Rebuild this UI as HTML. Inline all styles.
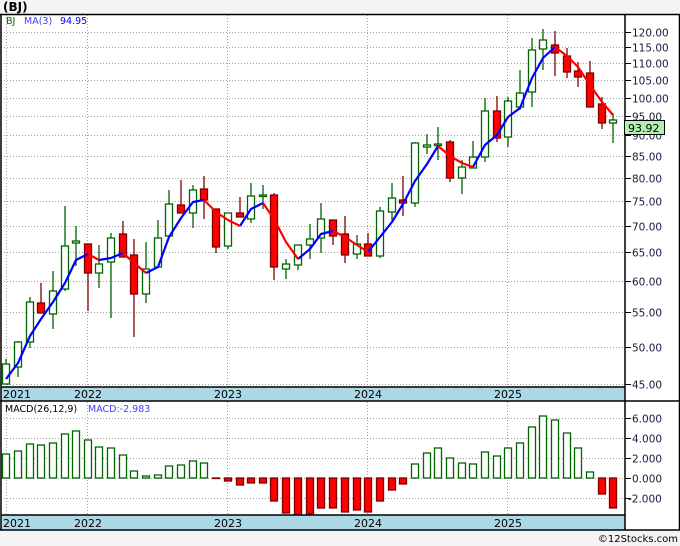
<!DOCTYPE html>
<html><head><meta charset="utf-8"><style>
html,body{margin:0;padding:0;background:#f4f4f4;}
svg{display:block;}
text{font-family:"DejaVu Sans","Liberation Sans",sans-serif;}
</style></head><body>
<svg width="680" height="546" viewBox="0 0 680 546" xmlns="http://www.w3.org/2000/svg">
<rect x="0" y="0" width="680" height="546" fill="#f4f4f4"/>
<text x="3" y="11" font-size="12" font-weight="bold" fill="#000">(BJ)</text>
<rect x="1" y="14" width="679" height="516" fill="#fff"/>
<!-- grids main -->
<g stroke="#a0a0a0" stroke-width="1" stroke-dasharray="1,2">
<line x1="1" x2="625" y1="32.5" y2="32.5"/><line x1="1" x2="625" y1="47.5" y2="47.5"/><line x1="1" x2="625" y1="63.5" y2="63.5"/><line x1="1" x2="625" y1="80.5" y2="80.5"/><line x1="1" x2="625" y1="98.5" y2="98.5"/><line x1="1" x2="625" y1="116.5" y2="116.5"/><line x1="1" x2="625" y1="135.5" y2="135.5"/><line x1="1" x2="625" y1="156.5" y2="156.5"/><line x1="1" x2="625" y1="178.5" y2="178.5"/><line x1="1" x2="625" y1="201.5" y2="201.5"/><line x1="1" x2="625" y1="226.5" y2="226.5"/><line x1="1" x2="625" y1="252.5" y2="252.5"/><line x1="1" x2="625" y1="281.5" y2="281.5"/><line x1="1" x2="625" y1="312.5" y2="312.5"/><line x1="1" x2="625" y1="347.5" y2="347.5"/><line x1="1" x2="625" y1="384.5" y2="384.5"/>
<line x1="6.5" x2="6.5" y1="15" y2="387"/><line x1="87.5" x2="87.5" y1="15" y2="387"/><line x1="227.5" x2="227.5" y1="15" y2="387"/><line x1="367.5" x2="367.5" y1="15" y2="387"/><line x1="507.5" x2="507.5" y1="15" y2="387"/>
<line x1="1" x2="625" y1="418.5" y2="418.5"/><line x1="1" x2="625" y1="438.5" y2="438.5"/><line x1="1" x2="625" y1="458.5" y2="458.5"/><line x1="1" x2="625" y1="478.5" y2="478.5"/><line x1="1" x2="625" y1="498.5" y2="498.5"/>
<line x1="6.5" x2="6.5" y1="402" y2="515"/><line x1="87.5" x2="87.5" y1="402" y2="515"/><line x1="227.5" x2="227.5" y1="402" y2="515"/><line x1="367.5" x2="367.5" y1="402" y2="515"/><line x1="507.5" x2="507.5" y1="402" y2="515"/>
</g>
<!-- candles -->
<g stroke-width="1.3">
<g stroke="#006400" fill="#fff">
<line x1="6" x2="6" y1="359" y2="384"/><rect x="2.5" y="364" width="7" height="20"/>
<line x1="18" x2="18" y1="341" y2="377"/><rect x="14.5" y="342" width="7" height="25"/>
<line x1="30" x2="30" y1="297" y2="348"/><rect x="26.5" y="302" width="7" height="40"/>
<line x1="53" x2="53" y1="271" y2="329"/><rect x="49.5" y="291" width="7" height="23"/>
<line x1="65" x2="65" y1="206" y2="291"/><rect x="61.5" y="246" width="7" height="43"/>
<line x1="76" x2="76" y1="226" y2="266"/><rect x="72.5" y="241" width="7" height="2"/>
<line x1="99" x2="99" y1="245" y2="288"/><rect x="95.5" y="264" width="7" height="9"/>
<line x1="111" x2="111" y1="233" y2="318"/><rect x="107.5" y="238" width="7" height="24"/>
<line x1="146" x2="146" y1="242" y2="303"/><rect x="142.5" y="269" width="7" height="25"/>
<line x1="158" x2="158" y1="220" y2="267"/><rect x="154.5" y="238" width="7" height="29"/>
<line x1="169" x2="169" y1="190" y2="236"/><rect x="165.5" y="204" width="7" height="32"/>
<line x1="193" x2="193" y1="185" y2="228"/><rect x="189.5" y="190" width="7" height="23"/>
<line x1="228" x2="228" y1="213" y2="249"/><rect x="224.5" y="213" width="7" height="33"/>
<line x1="251" x2="251" y1="183" y2="223"/><rect x="247.5" y="196" width="7" height="23"/>
<line x1="263" x2="263" y1="185" y2="209"/><rect x="259.5" y="195" width="7" height="1.5"/>
<line x1="286" x2="286" y1="259" y2="279"/><rect x="282.5" y="264" width="7" height="5"/>
<line x1="298" x2="298" y1="245" y2="270"/><rect x="294.5" y="245" width="7" height="20"/>
<line x1="310" x2="310" y1="224" y2="259"/><rect x="306.5" y="239" width="7" height="6"/>
<line x1="321" x2="321" y1="203" y2="253"/><rect x="317.5" y="219" width="7" height="19"/>
<line x1="357" x2="357" y1="235" y2="259"/><rect x="353.5" y="244" width="7" height="10"/>
<line x1="380" x2="380" y1="207" y2="258"/><rect x="376.5" y="211" width="7" height="45"/>
<line x1="392" x2="392" y1="183" y2="220"/><rect x="388.5" y="198" width="7" height="14"/>
<line x1="415" x2="415" y1="142" y2="207"/><rect x="411.5" y="143" width="7" height="60"/>
<line x1="427" x2="427" y1="134" y2="154"/><rect x="423.5" y="145" width="7" height="2"/>
<line x1="438" x2="438" y1="127" y2="160"/><rect x="434.5" y="144" width="7" height="1.5"/>
<line x1="462" x2="462" y1="160" y2="194"/><rect x="458.5" y="167" width="7" height="11"/>
<line x1="473" x2="473" y1="141" y2="168"/><rect x="469.5" y="157" width="7" height="11"/>
<line x1="485" x2="485" y1="98" y2="162"/><rect x="481.5" y="111" width="7" height="46"/>
<line x1="508" x2="508" y1="97" y2="147"/><rect x="504.5" y="101" width="7" height="36"/>
<line x1="520" x2="520" y1="70" y2="110"/><rect x="516.5" y="93" width="7" height="14"/>
<line x1="532" x2="532" y1="38" y2="107"/><rect x="528.5" y="50" width="7" height="42"/>
<line x1="543" x2="543" y1="29" y2="70"/><rect x="539.5" y="40" width="7" height="9"/>
<line x1="613" x2="613" y1="113" y2="143"/><rect x="609.5" y="120" width="7" height="3"/>
</g>
<g stroke="#800000" fill="#ff0000">
<line x1="41" x2="41" y1="283" y2="313"/><rect x="37.5" y="303" width="7" height="10"/>
<line x1="88" x2="88" y1="244" y2="311"/><rect x="84.5" y="244" width="7" height="29"/>
<line x1="123" x2="123" y1="221" y2="257"/><rect x="119.5" y="234" width="7" height="23"/>
<line x1="134" x2="134" y1="239" y2="337"/><rect x="130.5" y="255" width="7" height="39"/>
<line x1="181" x2="181" y1="180" y2="213"/><rect x="177.5" y="205" width="7" height="8"/>
<line x1="204" x2="204" y1="176" y2="219"/><rect x="200.5" y="189" width="7" height="11"/>
<line x1="216" x2="216" y1="209" y2="253"/><rect x="212.5" y="209" width="7" height="38"/>
<line x1="240" x2="240" y1="197" y2="217"/><rect x="236.5" y="213" width="7" height="4"/>
<line x1="274" x2="274" y1="193" y2="280"/><rect x="270.5" y="195" width="7" height="72"/>
<line x1="333" x2="333" y1="220" y2="245"/><rect x="329.5" y="220" width="7" height="16"/>
<line x1="345" x2="345" y1="216" y2="263"/><rect x="341.5" y="234" width="7" height="21"/>
<line x1="368" x2="368" y1="233" y2="256"/><rect x="364.5" y="244" width="7" height="12"/>
<line x1="403" x2="403" y1="176" y2="216"/><rect x="399.5" y="200" width="7" height="3"/>
<line x1="450" x2="450" y1="140" y2="182"/><rect x="446.5" y="142" width="7" height="36"/>
<line x1="497" x2="497" y1="96" y2="142"/><rect x="493.5" y="111" width="7" height="27"/>
<line x1="555" x2="555" y1="31" y2="76"/><rect x="551.5" y="45" width="7" height="8"/>
<line x1="567" x2="567" y1="48" y2="78"/><rect x="563.5" y="56" width="7" height="16"/>
<line x1="578" x2="578" y1="62" y2="87"/><rect x="574.5" y="71" width="7" height="6"/>
<line x1="590" x2="590" y1="61" y2="107"/><rect x="586.5" y="73" width="7" height="34"/>
<line x1="602" x2="602" y1="97" y2="129"/><rect x="598.5" y="104" width="7" height="19"/>
</g>
</g>
<!-- MA -->
<g fill="none" stroke-width="2.2" stroke-linejoin="round">
<g stroke="#0000ff">
<polyline points="6,379 18,363 30,336 41,319 53,302 65,283 76,260 88,254"/>
<polyline points="99,260 111,258 123,253"/>
<polyline points="146,273 158,267 169,237 181,218 193,202 204,200"/>
<polyline points="240,226 251,209 263,203"/>
<polyline points="298,259 310,249 321,234 333,231"/>
<polyline points="368,252 380,237 392,222 403,204 415,181 427,164 438,146"/>
<polyline points="473,167 485,145 497,135 508,117 520,108 532,78 543,58 555,47"/>
</g>
<g stroke="#ff0000">
<polyline points="88,254 99,260"/>
<polyline points="123,253 134,263 146,273"/>
<polyline points="204,200 216,212 228,220 240,226"/>
<polyline points="263,203 274,219 286,242 298,259"/>
<polyline points="333,231 345,237 357,245 368,252"/>
<polyline points="438,146 450,156 462,163 473,167"/>
<polyline points="555,47 567,56 578,67 590,85 602,102 613,115"/>
</g>
</g>
<!-- MACD bars -->
<g stroke-width="1.3">
<g stroke="#006400" fill="#fff">
<rect x="2.5" y="454" width="7" height="24"/><rect x="14.5" y="451" width="7" height="27"/><rect x="26.5" y="444" width="7" height="34"/><rect x="37.5" y="445" width="7" height="33"/><rect x="49.5" y="443" width="7" height="35"/><rect x="61.5" y="434" width="7" height="44"/><rect x="72.5" y="431" width="7" height="47"/><rect x="84.5" y="440" width="7" height="38"/><rect x="95.5" y="447" width="7" height="31"/><rect x="107.5" y="448" width="7" height="30"/><rect x="119.5" y="455" width="7" height="23"/><rect x="130.5" y="471" width="7" height="7"/><rect x="142.5" y="476" width="7" height="2"/><rect x="154.5" y="475" width="7" height="3"/><rect x="165.5" y="466" width="7" height="12"/><rect x="177.5" y="465" width="7" height="13"/><rect x="189.5" y="461" width="7" height="17"/><rect x="200.5" y="463" width="7" height="15"/>
<rect x="411.5" y="464" width="7" height="14"/><rect x="423.5" y="453" width="7" height="25"/><rect x="434.5" y="448" width="7" height="30"/><rect x="446.5" y="458" width="7" height="20"/><rect x="458.5" y="463" width="7" height="15"/><rect x="469.5" y="464" width="7" height="14"/><rect x="481.5" y="452" width="7" height="26"/><rect x="493.5" y="456" width="7" height="22"/><rect x="504.5" y="448" width="7" height="30"/><rect x="516.5" y="443" width="7" height="35"/><rect x="528.5" y="427" width="7" height="51"/><rect x="539.5" y="416" width="7" height="62"/><rect x="551.5" y="420" width="7" height="58"/><rect x="563.5" y="433" width="7" height="45"/><rect x="574.5" y="448" width="7" height="30"/><rect x="586.5" y="472" width="7" height="6"/>
</g>
<g stroke="#800000" fill="#ff0000">
<rect x="212.5" y="478" width="7" height="0.5"/><rect x="224.5" y="478" width="7" height="3"/><rect x="236.5" y="478" width="7" height="7"/><rect x="247.5" y="478" width="7" height="5"/><rect x="259.5" y="478" width="7" height="5"/><rect x="270.5" y="478" width="7" height="23"/><rect x="282.5" y="478" width="7" height="35"/><rect x="294.5" y="478" width="7" height="37"/><rect x="306.5" y="478" width="7" height="36"/><rect x="317.5" y="478" width="7" height="30"/><rect x="329.5" y="478" width="7" height="30"/><rect x="341.5" y="478" width="7" height="34"/><rect x="353.5" y="478" width="7" height="32"/><rect x="364.5" y="478" width="7" height="34"/><rect x="376.5" y="478" width="7" height="23"/><rect x="388.5" y="478" width="7" height="12"/><rect x="399.5" y="478" width="7" height="6"/>
<rect x="598.5" y="478" width="7" height="16"/><rect x="609.5" y="478" width="7" height="30"/>
</g>
</g>
<!-- year bands -->
<rect x="1" y="387" width="624" height="14" fill="#add8e6"/>
<rect x="1" y="515" width="624" height="15" fill="#add8e6"/>
<g stroke="#000" stroke-width="1.5" fill="none">
<line x1="0" x2="680" y1="14.5" y2="14.5"/>
<line x1="1" x2="1" y1="14" y2="530"/>
<line x1="1" x2="625" y1="387" y2="387"/>
<line x1="0" x2="680" y1="401" y2="401"/>
<line x1="1" x2="625" y1="515" y2="515"/>
<line x1="0" x2="680" y1="530" y2="530"/>
<line x1="625" x2="625" y1="14" y2="530"/>
<line x1="679.5" x2="679.5" y1="14" y2="530"/>
</g>
<g font-size="11" fill="#000">
<text x="3" y="398">2021</text><text x="74" y="398">2022</text><text x="214" y="398">2023</text><text x="354" y="398">2024</text><text x="494" y="398">2025</text>
<text x="3" y="527">2021</text><text x="74" y="527">2022</text><text x="214" y="527">2023</text><text x="354" y="527">2024</text><text x="494" y="527">2025</text>
</g>
<!-- axis ticks -->
<g stroke="#000" stroke-width="1">
<line x1="625" x2="631" y1="32.5" y2="32.5"/><line x1="625" x2="631" y1="47.5" y2="47.5"/><line x1="625" x2="631" y1="63.5" y2="63.5"/><line x1="625" x2="631" y1="80.5" y2="80.5"/><line x1="625" x2="631" y1="98.5" y2="98.5"/><line x1="625" x2="631" y1="116.5" y2="116.5"/><line x1="625" x2="631" y1="135.5" y2="135.5"/><line x1="625" x2="631" y1="156.5" y2="156.5"/><line x1="625" x2="631" y1="178.5" y2="178.5"/><line x1="625" x2="631" y1="201.5" y2="201.5"/><line x1="625" x2="631" y1="226.5" y2="226.5"/><line x1="625" x2="631" y1="252.5" y2="252.5"/><line x1="625" x2="631" y1="281.5" y2="281.5"/><line x1="625" x2="631" y1="312.5" y2="312.5"/><line x1="625" x2="631" y1="347.5" y2="347.5"/><line x1="625" x2="631" y1="384.5" y2="384.5"/>
<line x1="625" x2="631" y1="418.5" y2="418.5"/><line x1="625" x2="631" y1="438.5" y2="438.5"/><line x1="625" x2="631" y1="458.5" y2="458.5"/><line x1="625" x2="631" y1="478.5" y2="478.5"/><line x1="625" x2="631" y1="498.5" y2="498.5"/>
</g>
<g font-size="10.5" fill="#1a1a40">
<text x="632" y="36.5">120.00</text><text x="632" y="51.5">115.00</text><text x="632" y="67.5">110.00</text><text x="632" y="84.5">105.00</text><text x="632" y="102.5">100.00</text><text x="632" y="120.5">95.00</text><text x="632" y="139.5">90.00</text><text x="632" y="160.5">85.00</text><text x="632" y="182.5">80.00</text><text x="632" y="205.5">75.00</text><text x="632" y="230.5">70.00</text><text x="632" y="256.5">65.00</text><text x="632" y="285.5">60.00</text><text x="632" y="316.5">55.00</text><text x="632" y="351.5">50.00</text><text x="632" y="388.5">45.00</text>
<text x="632" y="422.5">6.000</text><text x="632" y="442.5">4.000</text><text x="632" y="462.5">2.000</text><text x="632" y="482.5">0.000</text><text x="628" y="502.5">-2.000</text>
</g>
<rect x="624.5" y="120.5" width="40" height="14" fill="#b0f0b0" stroke="#000" stroke-width="1"/>
<text x="628" y="132" font-size="11" fill="#000">93.92</text>
<g font-size="9.5">
<text x="6" y="24" fill="#006400">BJ</text><text x="24" y="24" fill="#4040ff">MA(3)</text><text x="60" y="24" fill="#0000ff">94.95</text>
<text x="5" y="412" fill="#000">MACD(26,12,9)</text><text x="88" y="412" fill="#4040ff">MACD:-2.983</text>
</g>
<text x="678" y="542" font-size="10" fill="#000" text-anchor="end">©12Stocks.com</text>
</svg>
</body></html>
